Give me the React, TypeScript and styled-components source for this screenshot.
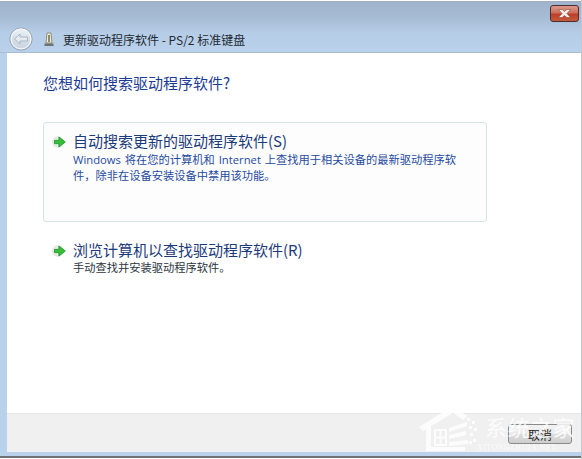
import styled, { createGlobalStyle } from "styled-components";

const CJK = `"Noto Sans CJK SC", "Open Sans", sans-serif`;
const LATIN_CJK = `"Open Sans", "Noto Sans CJK SC", sans-serif`;

const GreenArrow = () => (
  <ArrowIcon width="15" height="14" viewBox="0 0 15 14">
    <ellipse cx="6" cy="7" rx="6" ry="6" fill="#e3ebe3" />
    <path
      d="M2.5 5.4h4.4V2l6.4 5-6.4 5V8.6H2.5z"
      fill="#35c035"
      stroke="#1b8f25"
      strokeWidth="0.8"
      strokeLinejoin="round"
    />
  </ArrowIcon>
);

const BackArrow = () => (
  <svg width="24" height="24" viewBox="0 0 24 24">
    <defs>
      <linearGradient id="backFill" x1="0" y1="0" x2="0" y2="1">
        <stop offset="0" stopColor="#eef3f8" />
        <stop offset="0.5" stopColor="#d6dfe9" />
        <stop offset="1" stopColor="#c8d4e1" />
      </linearGradient>
    </defs>
    <circle cx="12" cy="12" r="11.2" fill="url(#backFill)" stroke="#98a6b5" strokeWidth="1" />
    <circle cx="12" cy="12" r="9.8" fill="none" stroke="#f4f7fa" strokeWidth="1" />
    <path
      d="M5.5 12l5.5-5v3h7.5v4H11v3z"
      fill="#e6ebf1"
      stroke="#a5b2c0"
      strokeWidth="0.9"
      strokeLinejoin="round"
    />
  </svg>
);

const KeyboardDevice = () => (
  <svg width="10" height="15" viewBox="0 0 10 15">
    <path d="M3 1h4l1 10H2z" fill="#f3efc8" stroke="#85857a" strokeWidth="0.9" />
    <rect x="4.2" y="3" width="1.6" height="7" fill="#6f7465" />
    <rect x="0.5" y="11.5" width="9" height="2.5" fill="#6d7470" />
  </svg>
);

const CloseGlyph = () => (
  <svg width="13" height="9" viewBox="0 0 13 9">
    <path
      d="M0.5 0.5h3.6l2.4 2 2.4-2h3.6L8.9 4.5l3.6 4H8.9L6.5 6.5l-2.4 2H0.5l3.6-4z"
      fill="#f6efec"
      stroke="#7a3a2c"
      strokeWidth="0.5"
      strokeLinejoin="round"
    />
  </svg>
);

const WatermarkLogo = () => (
  <svg width="62" height="49" viewBox="0 0 62 49">
    <path d="M2 24L36 3l14 10-4 4-10-7L6 28z" fill="#fff" />
    <path d="M9 24h5v20h34v4H9z" fill="#fff" />
    <path d="M18 27h11v15H18zM18 34.5h11M23.5 27v15" fill="none" stroke="#fff" strokeWidth="2" />
    <path d="M32 25l18-6v4l-18 6zM32 32l17-4v4l-17 4zM32 39l19-2v4l-19 2z" fill="#fff" />
    <path
      d="M50 15h3v3h-3zM55 18h3v3h-3zM52 23h3v3h-3zM57 25h3v3h-3zM53 30h3v3h-3zM56 36h3v3h-3zM52 38h3v3h-3z"
      fill="#fff"
    />
  </svg>
);

export default function App() {
  return (
    <>
      <GlobalStyle />
      <Page>
        <Glass>
          <CaptionRow>
            <CloseButton>
              <CloseGlyph />
            </CloseButton>
          </CaptionRow>
          <NavRow>
            <BackArrow />
            <DeviceSlot>
              <KeyboardDevice />
            </DeviceSlot>
            <WindowTitle>更新驱动程序软件 - PS/2 标准键盘</WindowTitle>
          </NavRow>
        </Glass>
        <Body>
          <Content>
            <Heading>您想如何搜索驱动程序软件?</Heading>
            <Card>
              <OptionRow>
                <GreenArrow />
                <OptionText>
                  <OptionTitle>自动搜索更新的驱动程序软件(S)</OptionTitle>
                  <Description>
                    Windows 将在您的计算机和 Internet 上查找用于相关设备的最新驱动程序软
                    <br />
                    件，除非在设备安装设备中禁用该功能。
                  </Description>
                </OptionText>
              </OptionRow>
            </Card>
            <PlainOption>
              <OptionRow>
                <GreenArrow />
                <OptionText>
                  <OptionTitle>浏览计算机以查找驱动程序软件(R)</OptionTitle>
                  <Description $muted>手动查找并安装驱动程序软件。</Description>
                </OptionText>
              </OptionRow>
            </PlainOption>
          </Content>
          <Footer>
            <CancelButton>取消</CancelButton>
          </Footer>
        </Body>
        <BottomEdge />
        <Watermark>
          <WatermarkLogo />
          <WatermarkText>
            <WatermarkName>系统之家</WatermarkName>
            <WatermarkUrl>XITONGZHIJIA.NET</WatermarkUrl>
          </WatermarkText>
        </Watermark>
      </Page>
    </>
  );
}

const GlobalStyle = createGlobalStyle`
  html, body {
    margin: 0;
    padding: 0;
    background: #fff;
    overflow: hidden;
  }
`;

const Page = styled.div`
  position: relative;
  box-sizing: border-box;
  width: 582px;
  height: 459px;
  display: flex;
  flex-direction: column;
  padding-top: 1px;
  overflow: hidden;
  font-family: ${CJK};
  border-right: 1px solid #c4c8cc;
`;

const Glass = styled.div`
  height: 52px;
  display: flex;
  flex-direction: column;
  flex-shrink: 0;
  background: linear-gradient(180deg, #9fb4cc 0%, #a6bbd4 30%, #b6cde7 62%, #b9d1ea 100%);
  border-top: 1px solid #a3aeb9;
  border-bottom: 1px solid #a9bdd2;
  box-sizing: border-box;
`;

const CaptionRow = styled.div`
  display: flex;
  justify-content: flex-end;
  height: 22px;
  padding: 3px 2px 0 0;
  box-sizing: border-box;
`;

const CloseButton = styled.div`
  box-sizing: border-box;
  width: 29px;
  height: 17px;
  display: flex;
  align-items: center;
  justify-content: center;
  border: 1px solid #4c2c2c;
  border-radius: 3px;
  background: linear-gradient(180deg, #d99a8c 0%, #cf6f5c 45%, #bd3f27 55%, #c65a3c 100%);
`;

const NavRow = styled.div`
  display: flex;
  align-items: center;
  height: 24px;
  padding-left: 9px;
  margin-top: 3px;
`;

const DeviceSlot = styled.div`
  display: flex;
  margin: 0 9px 0 11px;
`;

const WindowTitle = styled.div`
  font-size: 12px;
  color: #1f2a33;
  white-space: nowrap;
  position: relative;
  top: 0;
`;

const Body = styled.div`
  flex: 1;
  display: flex;
  flex-direction: column;
  margin-left: 7px;
  border-bottom: 4px solid #b9d1ea;
  box-shadow: -7px 0 0 #b9d1ea;
  min-height: 0;
`;

const Content = styled.div`
  flex: 1;
  background: #fff;
  padding: 19px 0 0 36px;
`;

const Heading = styled.div`
  font-size: 15px;
  line-height: 22px;
  color: #1c3a94;
  white-space: nowrap;
`;

const Card = styled.div`
  box-sizing: border-box;
  width: 444px;
  height: 100px;
  margin-top: 28px;
  padding: 8px 0 0 8px;
  background: #fdfdfe;
  border: 1px solid #d6e3e9;
  border-radius: 3px;
`;

const PlainOption = styled.div`
  margin-top: 18px;
  padding-left: 9px;
`;

const OptionRow = styled.div`
  display: flex;
  align-items: flex-start;
  gap: 5px;
`;

const ArrowIcon = styled.svg`
  flex-shrink: 0;
  margin-top: 4px;
`;

const OptionText = styled.div`
  display: flex;
  flex-direction: column;
  margin-left: 1px;
`;

const OptionTitle = styled.div`
  font-size: 15px;
  line-height: 20px;
  color: #1c3a7a;
  white-space: nowrap;
`;

const Description = styled.div<{ $muted?: boolean }>`
  margin-top: ${(p) => (p.$muted ? "0" : "1px")};
  font-family: ${LATIN_CJK};
  font-size: 11.25px;
  line-height: 16px;
  word-spacing: 1px;
  color: ${(p) => (p.$muted ? "#2b3440" : "#1f4aa0")};
  white-space: nowrap;
`;

const Footer = styled.div`
  box-sizing: border-box;
  height: 39px;
  flex-shrink: 0;
  display: flex;
  justify-content: flex-end;
  align-items: flex-start;
  padding: 10px 9px 0 0;
  background: #f0f0f0;
  border-top: 1px solid #e6e6e6;
`;

const CancelButton = styled.div`
  box-sizing: border-box;
  width: 64px;
  height: 20px;
  display: flex;
  align-items: center;
  justify-content: center;
  font-size: 12px;
  color: #222;
  border: 1px solid #8a8a8a;
  border-radius: 3px;
  background: linear-gradient(180deg, #f2f2f2 0%, #ebebeb 48%, #dcdcdc 52%, #cfcfcf 100%);
`;

const BottomEdge = styled.div`
  height: 2px;
  flex-shrink: 0;
  margin-bottom: 1px;
  background: #6e7274;
`;

const Watermark = styled.div`
  position: absolute;
  left: 417px;
  top: 403px;
  display: flex;
  align-items: flex-start;
  opacity: 0.82;
`;

const WatermarkText = styled.div`
  display: flex;
  flex-direction: column;
  margin: 11px 0 0 6px;
`;

const WatermarkName = styled.div`
  font-size: 22px;
  line-height: 24px;
  letter-spacing: 0.5px;
  color: #fff;
  white-space: nowrap;
`;

const WatermarkUrl = styled.div`
  margin: 6px 0 0 -8px;
  font-family: "Liberation Serif", serif;
  font-size: 8px;
  line-height: 8px;
  letter-spacing: 0.4px;
  color: #fff;
  white-space: nowrap;
`;
